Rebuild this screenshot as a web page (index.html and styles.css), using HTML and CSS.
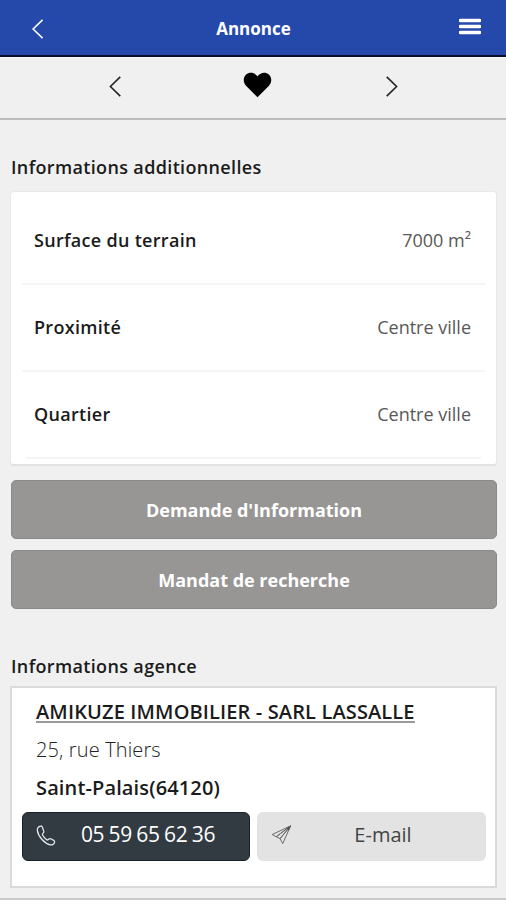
FILE: index.html
```html
<!DOCTYPE html>
<html lang="fr">
<head>
<meta charset="utf-8">
<title>Annonce</title>
<link rel="stylesheet" href="styles.css">
</head>
<body>
<header class="header">
  <svg class="header-back" viewBox="0 0 14 24"><path d="M12.5 2 2.2 12l10.3 10"/></svg>
  <h1 class="header-title">Annonce</h1>
  <svg class="header-menu" viewBox="0 0 22 17"><path d="M1.3 2.5h19.4M1.3 8.5h19.4M1.3 14.5h19.4"/></svg>
</header>
<nav class="pager">
  <svg class="chevron" viewBox="0 0 14 24"><path d="M12.5 2 2.2 12l10.3 10"/></svg>
  <svg class="heart" viewBox="0 0 28 26"><path d="M14 25.2 3 14.3C-.8 10.5-.4 5.200 2.600 2.500 5.900-.4 10.900.2 14 4.200 17.100.2 22.100-.4 25.400 2.500c3 2.700 3.400 8-.4 11.800z"/></svg>
  <svg class="chevron" viewBox="0 0 14 24"><path d="M1.500 2 11.800 12 1.500 22"/></svg>
</nav>
<main class="content">
  <h2 class="section-title">Informations additionnelles</h2>
  <dl class="details">
    <div class="row"><dt>Surface du terrain</dt><dd>7000 m²</dd></div>
    <div class="row"><dt>Proximité</dt><dd>Centre ville</dd></div>
    <div class="row"><dt>Quartier</dt><dd>Centre ville</dd></div>
  </dl>
  <button class="action">Demande d'Information</button>
  <button class="action action-search">Mandat de recherche</button>
  <h2 class="section-title agency-title">Informations agence</h2>
  <section class="agency">
    <div class="agency-name"><a>AMIKUZE IMMOBILIER - SARL LASSALLE</a></div>
    <div class="agency-street">25, rue Thiers</div>
    <div class="agency-city">Saint-Palais(64120)</div>
    <div class="contacts">
      <button class="contact phone">
        <svg viewBox="0 0 22 24"><path d="M5.200 1.600C3 2 1.200 3.700 1.500 6.400c.7 6.600 8.200 14.800 14.300 15.900 2 .4 4.300-.9 4.700-2.900.2-1-.3-1.600-1.100-2.100l-3.100-1.700c-.9-.5-1.700-.2-2.300.5-.8 1-1.500 1.100-2.500.4-1.700-1.200-3.300-3.100-4.300-5-.5-1-.2-1.500.6-2.100.9-.6 1.100-1.400.7-2.300L7 2.800c-.4-.9-1-1.400-1.800-1.200z"/></svg>
        <span>05 59 65 62 36</span>
      </button>
      <button class="contact mail">
        <svg viewBox="0 0 22 22"><path d="M20.500 1.500 1.200 10.500l4.300 2.300zM20.500 1.500 5.500 12.800l4 2zM20.500 1.500 9.500 14.800l2.800 5.200z"/><path class="plane-tip" d="M20.500 1.500 16.500 3.600l2 2.400z"/></svg>
        <span>E-mail</span>
      </button>
    </div>
  </section>
</main>
<footer class="bottom-line"></footer>
</body>
</html>
```
FILE: styles.css
```css
* { box-sizing: border-box; }
body {
  margin: 0;
  height: 900px;
  display: flex;
  flex-direction: column;
  overflow: hidden;
  background: #f0f0f0;
  color: #1b1b1b;
  font-family: "Open Sans", sans-serif;
  font-size: 18px;
}
svg { display: block; flex: none; fill: none; }
button { border: 0; font: inherit; padding: 0; }
.header {
  height: 57px;
  flex: none;
  display: flex;
  align-items: center;
  justify-content: space-between;
  padding: 0 25px 0 31px;
  background: #2449aa;
  border-bottom: 2px solid #090d2d;
}
.header-back { width: 13px; height: 22px; margin-top: 2px; stroke: #fff; stroke-width: 1.7; }
.header-title { margin: 1px 0 0 4px; color: #fff; font-size: 17px; font-weight: 700; }
.header-menu { width: 22px; height: 17px; margin-top: -2px; stroke: #fff; stroke-width: 3.5; stroke-linecap: round; }
.pager {
  height: 63px;
  flex: none;
  display: flex;
  align-items: center;
  justify-content: space-between;
  padding: 0 107px 3px 108px;
  border-top: 1px solid #fafafa;
  border-bottom: 2px solid #bdbdbd;
}
.chevron { width: 14px; height: 23px; stroke: #222; stroke-width: 1.6; }
.heart { width: 29px; height: 26px; fill: #000; margin: -4px 0 0 8px; }
.content { padding: 0 9px 0 10px; flex: 1; }
.section-title { margin: 34px 0 11px 1px; height: 26px; font-size: 18px; line-height: 26px; font-weight: 600; letter-spacing: .35px; }
.details {
  margin: 0;
  height: 275px;
  padding: 6px 11px 0;
  background: #fff;
  border: 1px solid #e9e9e9;
  border-bottom: 2px solid #e2e2e2;
  border-radius: 4px;
}
.row {
  height: 87px;
  display: flex;
  align-items: center;
  justify-content: space-between;
  padding: 0 14px 2px 12px;
  border-bottom: 2px solid #f5f5f5;
}
.row:last-child { margin: 0 4px; padding: 0 10px 2px 8px; }
dt { font-weight: 600; letter-spacing: .3px; }
dd { margin: 0; color: #585858; }
.action {
  display: block;
  width: 486px;
  height: 59px;
  margin: 14px 0 0 auto;
  border: 1px solid #8b8a88;
  border-radius: 5px;
  background: #989694;
  color: #fff;
  font-weight: 700;
}
.action-search { margin-top: 11px; }
.agency-title { margin: 44px 0 7px 1px; }
.agency {
  height: 202px;
  padding: 9px 9px 0 10px;
  background: #fff;
  border: 2px solid #dadada;
}
.agency-name, .agency-street, .agency-city { height: 38px; line-height: 30px; padding-left: 14px; font-size: 20px; letter-spacing: .13px; white-space: nowrap; }
.agency-name, .agency-city { font-weight: 600; }
.agency-city { height: 39px; }
.agency-name a { border-bottom: 2px solid #999; display: inline-block; height: 26px; }
.agency-street { color: #222; font-weight: 300; }
.contacts { display: grid; grid-template-columns: 228px 229px; gap: 7px; }
.contact { height: 49px; display: flex; align-items: center; border-radius: 6px; font-size: 20px; }
.contact span { flex: 1; text-align: center; margin-top: -5px; }
.phone { padding: 0 9px 0 13px; background: #323a42; border: 1px solid #16222b; color: #fff; font-size: 21px; letter-spacing: -.35px; word-spacing: -.7px; }
.phone svg { width: 20px; height: 23px; margin-top: -3px; stroke: #e5e8ea; stroke-width: 1.4; }
.mail { padding: 0 12px 0 14px; background: #e3e3e3; color: #444; }
.mail svg { width: 21px; height: 22px; margin-top: -4px; stroke: #666; stroke-width: 1; stroke-linejoin: round; }
.mail .plane-tip { fill: #444; }
.bottom-line { height: 2px; background: #c8c8c8; }
```
